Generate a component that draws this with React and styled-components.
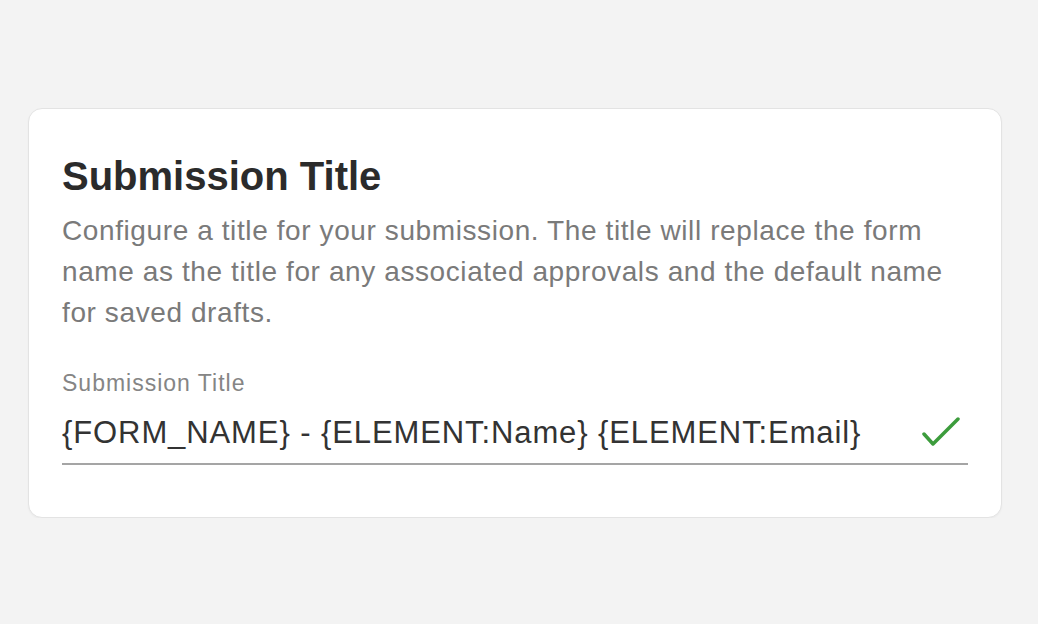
import React from 'react'
import styled, { createGlobalStyle } from "styled-components";

const GlobalStyle = createGlobalStyle`
  html, body {
    margin: 0;
    padding: 0;
    background: #f3f3f3;
    font-family: 'Liberation Sans', Arial, sans-serif;
  }
`;

const App = () => {
  return (
    <Page>
      <GlobalStyle />
      <Card>
        <Title>Submission Title</Title>
        <Description>
          Configure a title for your submission. The title will replace the form
          name as the title for any associated approvals and the default name
          for saved drafts.
        </Description>
        <Label>Submission Title</Label>
        <Field>
          <Value>{'{FORM_NAME} - {ELEMENT:Name} {ELEMENT:Email}'}</Value>
          <Check viewBox="0 0 40 32" aria-hidden="true">
            <path d="M3 17 L12 27 L37 2" />
          </Check>
        </Field>
      </Card>
    </Page>
  )
}

export default App;

const Page = styled.main`
  padding: 108px 36px 0 28px;
`;

const Card = styled.section`
  width: 974px;
  box-sizing: border-box;
  background: #fff;
  border: 1px solid #e3e3e3;
  border-radius: 14px;
  box-shadow: 0 1px 2px rgba(0, 0, 0, 0.04);
  padding: 43px 33px 52px 33px;
`;

const Title = styled.h2`
  margin: 0;
  font-size: 40px;
  line-height: 48px;
  font-weight: 700;
  color: #2b2b2b;
`;

const Description = styled.p`
  margin: 10px 0 0;
  font-size: 28px;
  line-height: 41px;
  letter-spacing: 0.6px;
  color: #7a7a7a;
`;

const Label = styled.div`
  margin-top: 37px;
  font-size: 23px;
  line-height: 26px;
  letter-spacing: 1px;
  color: #858585;
`;

const Field = styled.div`
  margin-top: 19px;
  display: flex;
  align-items: center;
  justify-content: space-between;
  padding: 0 7px 12px 0;
  border-bottom: 2px solid #a5a5a5;
`;

const Value = styled.span`
  font-size: 31px;
  line-height: 36px;
  letter-spacing: 0.9px;
  color: #333;
`;

const Check = styled.svg`
  width: 40px;
  height: 32px;
  fill: none;
  stroke: #3c9c3c;
  stroke-width: 3.5;
  stroke-linecap: round;
  stroke-linejoin: round;
`;
